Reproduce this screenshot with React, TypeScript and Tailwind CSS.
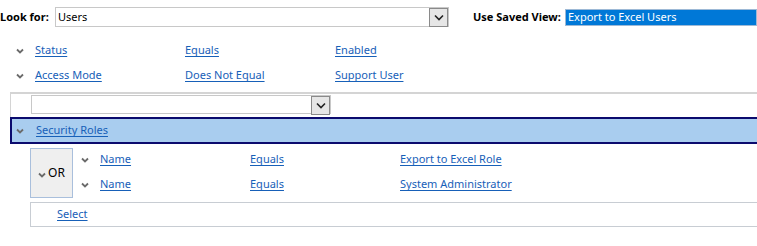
import React from 'react';

const FONT = { fontFamily: '"Segoe UI", "Noto Sans", "Open Sans", sans-serif' };

const Chevron = ({ className = '' }: { className?: string }) => (
  <svg width="8" height="6" viewBox="0 0 8 6" className={className}>
    <path d="M1 1.5 L4 4.5 L7 1.5" fill="none" stroke="#6b6b6b" strokeWidth="1.8" />
  </svg>
);

const DropButton = () => (
  <div className="w-[19px] h-[19px] bg-[#e6e6e6] border border-[#8a8a8a] flex items-center justify-center">
    <svg width="10" height="7" viewBox="0 0 10 7">
      <path d="M1 1.5 L5 5.5 L9 1.5" fill="none" stroke="#222" strokeWidth="1.6" />
    </svg>
  </div>
);

const Link = ({ children }: { children: React.ReactNode }) => (
  <a className="text-[#1760b8] underline underline-offset-2 decoration-[#1760b8] cursor-pointer whitespace-nowrap">{children}</a>
);

const ConditionRow = ({ field, op, value }: { field: string; op: string; value: string }) => (
  <div className="h-[25px] flex items-center">
    <div className="w-[35px] flex justify-center pl-[4px]">
      <Chevron />
    </div>
    <div className="w-[150px]"><Link>{field}</Link></div>
    <div className="w-[150px]"><Link>{op}</Link></div>
    <div><Link>{value}</Link></div>
  </div>
);

const NestedRow = ({ field, op, value }: { field: string; op: string; value: string }) => (
  <div className="h-[25px] flex items-center">
    <div className="w-[27px] flex pl-[8px]">
      <Chevron />
    </div>
    <div className="w-[150px]"><Link>{field}</Link></div>
    <div className="w-[150px]"><Link>{op}</Link></div>
    <div><Link>{value}</Link></div>
  </div>
);

export default function App() {
  return (
    <div className="w-[757px] h-[246px] bg-white text-[11px] text-black overflow-hidden" style={FONT}>
      {/* Header */}
      <div className="h-[34px] flex items-center">
        <span className="font-bold w-[55px] whitespace-nowrap">Look for:</span>
        <div className="w-[394px] h-[20px] border border-[#c8c8c8] flex items-center">
          <span className="flex-1 pl-[2px]">Users</span>
          <DropButton />
        </div>
        <span className="font-bold ml-[24px] w-[92px] whitespace-nowrap">Use Saved View:</span>
        <div className="flex-1 h-[17px] border border-[#9db9d6] bg-[#0078d7] text-white pl-[2px] flex items-center whitespace-nowrap">
          Export to Excel Users
        </div>
      </div>

      <div className="pt-[4px]">
        <ConditionRow field="Status" op="Equals" value="Enabled" />
        <ConditionRow field="Access Mode" op="Does Not Equal" value="Support User" />
      </div>

      {/* add condition box */}
      <div className="ml-[10px] mt-[4px] border-t-2 border-l border-[#d4d4d4] h-[25px] flex items-start pl-[20px] pt-[1px]">
        <div className="w-[300px] h-[19px] border border-[#c8c8c8] flex justify-end">
          <DropButton />
        </div>
      </div>

      {/* Security Roles group */}
      <div className="ml-[10px] h-[27px] bg-[#a9cdef] border-y-2 border-l-2 border-[#0b0b6e] flex items-center">
        <div className="w-[24px] flex pl-[4px]">
          <Chevron />
        </div>
        <Link>Security Roles</Link>
      </div>

      <div className="ml-[30px] mt-[4px] flex">
        <div className="w-[43px] h-[50px] bg-[#efefef] border border-[#a9bfdc] flex items-center justify-center gap-[2px]">
          <Chevron className="mt-[3px]" />
          <span className="text-[12px]">OR</span>
        </div>
        <div className="-mt-[1px]">
          <NestedRow field="Name" op="Equals" value="Export to Excel Role" />
          <NestedRow field="Name" op="Equals" value="System Administrator" />
        </div>
      </div>

      <div className="ml-[30px] mt-[4px] h-[25px] border border-r-0 border-[#c8cdd3] flex items-center pl-[26px]">
        <Link>Select</Link>
      </div>
    </div>
  );
}
